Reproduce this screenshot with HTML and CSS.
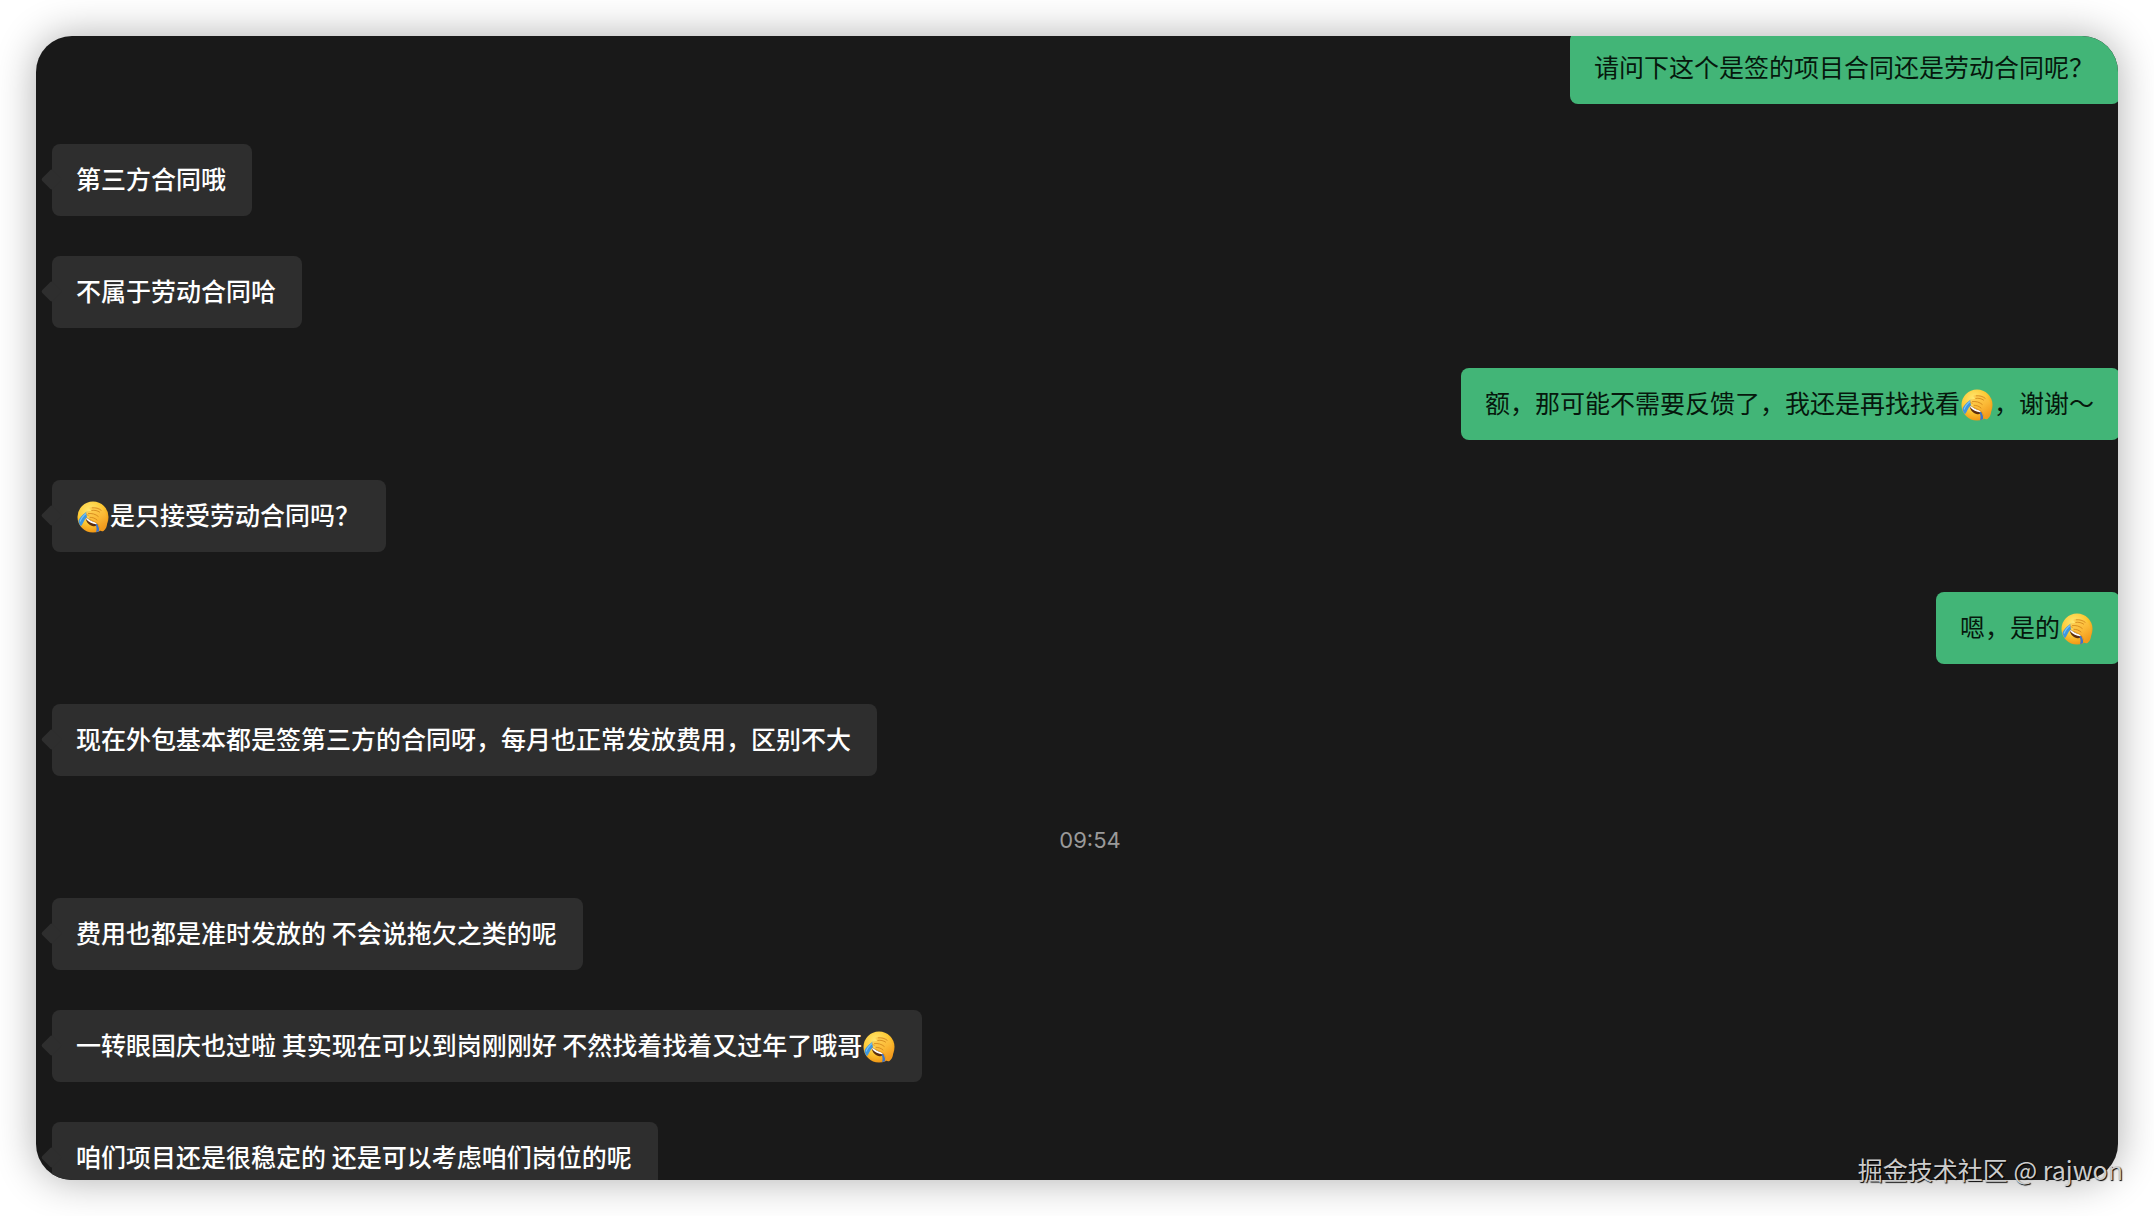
FILE: index.html
```html
<!DOCTYPE html>
<html lang="zh-CN">
  <head>
    <meta charset="UTF-8" />
    <meta name="viewport" content="width=device-width, initial-scale=1.0" />
    <title>聊天记录</title>
    <link rel="stylesheet" href="styles.css">
  </head>
  <body>
    <svg class="sprite" aria-hidden="true">
      <defs>
        <radialGradient id="face" cx="0.4" cy="0.3" r="0.75">
          <stop offset="0" stop-color="#ffe873" />
          <stop offset="0.55" stop-color="#fdc934" />
          <stop offset="1" stop-color="#ef8f10" />
        </radialGradient>
        <linearGradient id="hand" x1="0" y1="0" x2="0.6" y2="1">
          <stop offset="0" stop-color="#ffd75a" />
          <stop offset="0.6" stop-color="#fbb936" />
          <stop offset="1" stop-color="#f39a1c" />
        </linearGradient>
        <symbol id="facepalm" viewBox="0 0 32 32">
          <circle cx="16" cy="16" r="15.5" fill="url(#face)" />
          <path d="M8.5 15.5c3.6 3.4 8 5.600 12.800 6.200c-.6 2.800-2.900 4.100-5.900 3.300c-3.800-1-6.900-4.700-6.900-9.500z" fill="#5c2d0e" />
          <path d="M9 16.200c3.400 3 7.200 4.900 11.400 5.500l-.9 1.600c-4.200-.5-7.800-2.300-10.100-4.900z" fill="#fff" />
          <path d="M10.200 10.500c-3.700 2.100-7.500 6-8.700 9.400c.3 1.900 1.200 3.900 2.500 5.400c2.400-3.100 3.600-7.500 7.400-11.800z" fill="#3d97e0" />
          <path d="M9.400 12.200c-3 2.300-5.300 5.100-6.300 8.300" fill="none" stroke="#7cc4f5" stroke-width="1.100" />
          <path d="M19.600 22.500c1.800 1.500 2.700 4.500 2.500 7.600c-.9.500-2 .9-3 1.100c.8-3 .6-5.700-.8-7.800z" fill="#3d74c9" />
          <path d="M9.200 12.600c-.5-1.300.6-2.200 2-2.400l3.600-.8l-2-1.200c-1-.9-.2-2.300 1.200-2.100c4.600-1 9.900.4 13 3.800c2.100 2.400 2.700 6.300 3.200 10.200c.2 3.900-.8 8-3.700 9.800c-2 .8-3.600-.1-4-2.100c-.4-2.900-1.200-4.700-3.800-6.100l-6-3.200c-1.200-.7-1-2 .2-2.100l-2.700-1.400c-1-.5-1.200-1.700-.2-2z" fill="url(#hand)" />
          <path d="M14.800 9.400c3-.5 5.600.2 7.800 1.700M11.400 12.600c3.700-.5 7.100.5 9.800 2.800M13 16.300c2.700 0 5 .9 7 2.700M15.200 6.800c3.500-.3 6.600.6 8.900 2.400" fill="none" stroke="#cf8118" stroke-width="0.8" stroke-linecap="round" />
          <path d="M9.200 12.600c.2 1 1.200 1.300 2.500 1.900M12.700 18.100l6 3.200c2.600 1.400 3.400 3.200 3.800 6.100" fill="none" stroke="#dd8a18" stroke-width="0.6" />
        </symbol>
      </defs>
    </svg>

    <main class="chat">
      <div class="messages">
        <div class="message sent">请问下这个是签的项目合同还是劳动合同呢？</div>
        <div class="message received">第三方合同哦</div>
        <div class="message received">不属于劳动合同哈</div>
        <div class="message sent">额，那可能不需要反馈了，我还是再找找看<svg class="emoji"><use href="#facepalm" /></svg>，谢谢～</div>
        <div class="message received"><svg class="emoji"><use href="#facepalm" /></svg>是只接受劳动合同吗？</div>
        <div class="message sent">嗯，是的<svg class="emoji"><use href="#facepalm" /></svg></div>
        <div class="message received">现在外包基本都是签第三方的合同呀，每月也正常发放费用，区别不大</div>
        <time class="time">09:54</time>
        <div class="message received">费用也都是准时发放的 不会说拖欠之类的呢</div>
        <div class="message received">一转眼国庆也过啦 其实现在可以到岗刚刚好 不然找着找着又过年了哦哥<svg class="emoji"><use href="#facepalm" /></svg></div>
        <div class="message received">咱们项目还是很稳定的 还是可以考虑咱们岗位的呢</div>
      </div>
    </main>
    <div class="watermark">掘金技术社区 @ rajwon</div>
  </body>
</html>
```

FILE: styles.css
```css
* {
  box-sizing: border-box;
}

body {
  margin: 0;
  padding: 36px;
  height: 100vh;
  position: relative;
  background-color: #fff;
  font-family: "Noto Sans CJK SC", sans-serif;
}

.sprite {
  position: absolute;
  width: 0;
  height: 0;
}

.chat {
  height: 100%;
  overflow: hidden;
  border-radius: 36px;
  background-color: #191919;
  box-shadow: 0 0 40px rgba(0, 0, 0, 0.32);
}

/* the list is scrolled a little past the first bubble */
.messages {
  display: flex;
  flex-direction: column;
  gap: 40px;
  margin: -4px -2px 0 16px;
}

.message {
  position: relative;
  flex: none;
  padding: 16px 26px 20px 24px;
  border-radius: 8px;
  font-size: 25px;
  line-height: 36px;
  white-space: nowrap;
}

.received {
  align-self: flex-start;
  background-color: #2e2e2e;
  color: #fff;
  font-weight: 500;
}

.received::before {
  content: "";
  position: absolute;
  left: -8px;
  top: 28px;
  width: 15px;
  height: 15px;
  border-radius: 2px;
  background-color: #2e2e2e;
  transform: rotate(45deg);
}

.sent {
  align-self: flex-end;
  background-color: #42b577;
  color: #06180d;
}

.emoji {
  width: 32px;
  height: 32px;
  margin: -5px 1px -3px;
  vertical-align: middle;
}

.time {
  padding: 6px 0 0 8px;
  color: #9a9a9a;
  font-family: Inter, sans-serif;
  font-size: 22px;
  line-height: 36px;
  text-align: center;
}

.watermark {
  position: absolute;
  right: 31px;
  bottom: 29px;
  color: #ccc;
  font-size: 25px;
  line-height: 36px;
  text-shadow: 1px 1px 1px #000;
}
```
